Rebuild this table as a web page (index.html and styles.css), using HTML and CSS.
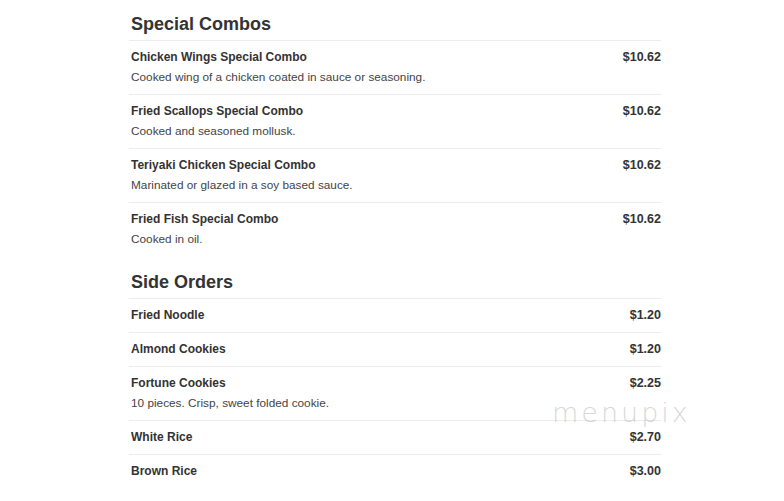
FILE: index.html
```html
<!DOCTYPE html>
<html>
<head>
<meta charset="utf-8">
<link rel="stylesheet" href="styles.css">
</head>
<body>
<main class="menu">
  <section class="section">
    <h2 class="section-title">Special Combos</h2>
    <div class="item">
      <div class="item-head"><span class="item-name">Chicken Wings Special Combo</span><span class="item-price">$10.62</span></div>
      <p class="item-desc">Cooked wing of a chicken coated in sauce or seasoning.</p>
    </div>
    <div class="item">
      <div class="item-head"><span class="item-name">Fried Scallops Special Combo</span><span class="item-price">$10.62</span></div>
      <p class="item-desc">Cooked and seasoned mollusk.</p>
    </div>
    <div class="item">
      <div class="item-head"><span class="item-name">Teriyaki Chicken Special Combo</span><span class="item-price">$10.62</span></div>
      <p class="item-desc">Marinated or glazed in a soy based sauce.</p>
    </div>
    <div class="item">
      <div class="item-head"><span class="item-name">Fried Fish Special Combo</span><span class="item-price">$10.62</span></div>
      <p class="item-desc">Cooked in oil.</p>
    </div>
  </section>
  <section class="section">
    <h2 class="section-title">Side Orders</h2>
    <div class="item">
      <div class="item-head"><span class="item-name">Fried Noodle</span><span class="item-price">$1.20</span></div>
    </div>
    <div class="item">
      <div class="item-head"><span class="item-name">Almond Cookies</span><span class="item-price">$1.20</span></div>
    </div>
    <div class="item">
      <div class="item-head"><span class="item-name">Fortune Cookies</span><span class="item-price">$2.25</span></div>
      <p class="item-desc">10 pieces. Crisp, sweet folded cookie.</p>
    </div>
    <div class="item">
      <div class="item-head"><span class="item-name">White Rice</span><span class="item-price">$2.70</span></div>
    </div>
    <div class="item">
      <div class="item-head"><span class="item-name">Brown Rice</span><span class="item-price">$3.00</span></div>
    </div>
  </section>
</main>
<div class="watermark">menupix</div>
</body>
</html>
```

FILE: styles.css
```css
html, body {
  margin: 0;
  padding: 0;
  background: #fff;
}
body {
  font-family: "Liberation Sans", Arial, sans-serif;
  color: #333;
  position: relative;
  width: 784px;
  height: 501px;
  overflow: hidden;
}
.menu {
  margin-left: 129px;
  width: 532px;
  padding-top: 13px;
}
.section {
  margin-bottom: 15px;
}
.section-title {
  font-size: 18px;
  font-weight: bold;
  margin: 0;
  padding-left: 2px;
  line-height: 22px;
  padding-bottom: 5px;
  color: #333;
}
.item {
  border-top: 1px solid #ececec;
  padding: 8px 0 9px 2px;
}
.item-head {
  display: flex;
  justify-content: space-between;
  line-height: 16px;
}
.item-name {
  font-size: 12px;
  font-weight: bold;
  color: #333;
}
.item-price {
  font-size: 12.5px;
  font-weight: bold;
  color: #333;
}
.item-desc {
  margin: 4px 0 0;
  font-size: 11.8px;
  line-height: 16px;
  color: #444;
}
.watermark {
  position: absolute;
  left: 552px;
  top: 397px;
  font-family: "DejaVu Sans", sans-serif;
  font-weight: 200;
  font-size: 27px;
  letter-spacing: 3px;
  color: rgba(175, 175, 175, 0.5);
}
```
